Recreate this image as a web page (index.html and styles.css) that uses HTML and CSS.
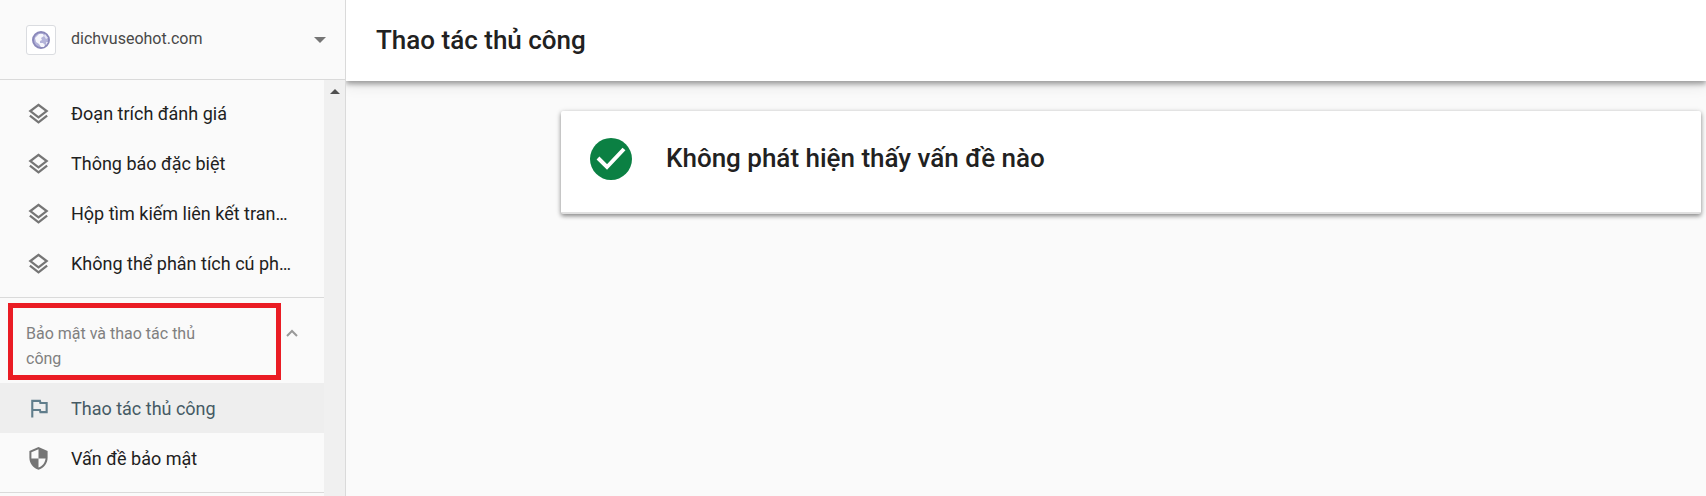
FILE: index.html
```html
<!DOCTYPE html>
<html lang="vi">
<head>
<meta charset="utf-8">
<meta name="viewport" content="width=device-width, initial-scale=1">
<title>Thao tác thủ công</title>
<link rel="stylesheet" href="styles.css">
</head>
<body>
<svg class="symbols" aria-hidden="true">
  <symbol id="layers" viewBox="0 0 24 24"><path d="M12 3 20.500 9.500 12 16 3.500 9.500z M3 14.300 12 21.300 21 14.300" fill="none" stroke="currentColor" stroke-width="2.400"/></symbol>
</svg>
<div class="app">
  <aside class="sidebar">
    <button class="property" type="button">
      <span class="favicon">
        <svg viewBox="0 0 20 20" aria-hidden="true"><circle cx="10" cy="10" r="8" fill="#b3b3d9" stroke="#8a88ba" stroke-width="2"/><path d="M4 8l4-4 4 0 1 2-3 2 1 2-2 1 0 2 3 0 2 2-1 2-3 0-2-3-3-2z" fill="#f6f6fc"/><path d="M14 4l3 4-2 1-2-3zM15 12l2 0-2 3z" fill="#e4e4f4"/></svg>
      </span>
      <span class="property-name">dichvuseohot.com</span>
      <svg class="caret" viewBox="0 0 12 6" aria-hidden="true"><path d="M0 0h12L6 6z"/></svg>
    </button>
    <div class="scroll-area">
      <nav class="menu">
        <div class="group">
          <a class="item" href="#"><svg class="icon"><use href="#layers"/></svg><span class="label">Đoạn trích đánh giá</span></a>
          <a class="item" href="#"><svg class="icon"><use href="#layers"/></svg><span class="label">Thông báo đặc biệt</span></a>
          <a class="item" href="#"><svg class="icon"><use href="#layers"/></svg><span class="label">Hộp tìm kiếm liên kết tran…</span></a>
          <a class="item" href="#"><svg class="icon"><use href="#layers"/></svg><span class="label">Không thể phân tích cú ph…</span></a>
        </div>
        <div class="group group-security">
          <button class="group-title" type="button" aria-expanded="true">
            <span class="group-name">Bảo mật và thao tác thủ công</span>
            <svg class="chevron" viewBox="0 0 12 8" aria-hidden="true"><path d="M1 7l5-5 5 5" fill="none" stroke="currentColor" stroke-width="2"/></svg>
            <span class="highlight"></span>
          </button>
          <a class="item active" href="#" aria-current="page"><svg class="icon" viewBox="0 0 24 24"><path d="M5.500 21.500V4h8l.5 2.200H20.500v9.600h-6.500L13.500 13.500H5.500" fill="none" stroke="currentColor" stroke-width="2.200"/></svg><span class="label">Thao tác thủ công</span></a>
          <a class="item" href="#"><svg class="icon" viewBox="0 0 24 24"><path d="M12 0 2.500 4.200v7c0 5.800 4 11 9.500 12.600 5.500-1.600 9.500-6.800 9.500-12.600v-7z" fill="currentColor"/><path d="M12 2.400V12H4.600V5.600zM12 12h7.400c-.6 4.400-3.400 8.100-7.400 9.500z" fill="#fafafa"/></svg><span class="label">Vấn đề bảo mật</span></a>
        </div>
      </nav>
      <div class="scrollbar"><svg class="scroll-up" viewBox="0 0 10 5" aria-hidden="true"><path d="M5 0l5 5H0z"/></svg></div>
    </div>
  </aside>
  <main class="main">
    <header class="topbar"><h1 class="heading">Thao tác thủ công</h1></header>
    <section class="card">
      <svg class="status" viewBox="0 0 42 42" aria-hidden="true"><circle cx="21" cy="21" r="21" fill="#0b8043"/><path d="M8 20l9 9L34 11" fill="none" stroke="#fff" stroke-width="4"/></svg>
      <h2 class="heading">Không phát hiện thấy vấn đề nào</h2>
    </section>
  </main>
</div>
</body>
</html>
```
FILE: styles.css
```css
* {
  box-sizing: border-box;
}

body {
  margin: 0;
  background: #fafafa;
  color: #212121;
  font-family: Roboto, sans-serif;
  font-size: 18px;
}

button {
  border: 0;
  background: none;
  font-family: inherit;
  text-align: left;
}

.symbols {
  position: absolute;
  width: 0;
  height: 0;
}

.app {
  display: flex;
  height: 100vh;
}

.sidebar {
  display: flex;
  flex: 0 0 346px;
  flex-direction: column;
  border-right: 1px solid #dadada;
}

.property {
  display: flex;
  flex: 0 0 80px;
  align-items: center;
  gap: 15px;
  padding: 0 19px 0 26px;
  border-bottom: 1px solid #dadada;
  color: #484848;
  font-size: 16px;
}

.favicon {
  display: flex;
  padding: 4px;
  border: 1px solid #dadce0;
  border-radius: 3px;
  background: #fff;
}

.favicon svg {
  width: 20px;
  height: 20px;
}

.property-name {
  flex: 1;
  padding-bottom: 2px;
}

.caret {
  width: 12px;
  height: 6px;
  fill: #757575;
}

.scroll-area {
  display: flex;
  flex: 1;
  min-height: 0;
  overflow: hidden;
}

.menu {
  flex: 1;
  min-width: 0;
}

.group {
  padding: 8px 0 9px;
  border-bottom: 1px solid #dadada;
}

.group-security {
  padding-top: 0;
}

.item {
  display: flex;
  align-items: center;
  gap: 21px;
  height: 50px;
  padding-left: 27px;
  color: #212121;
  text-decoration: none;
}

.icon {
  flex: none;
  width: 23px;
  height: 23px;
  color: #757575;
}

.label {
  white-space: nowrap;
}

.active {
  background: #eeeeee;
  color: #455a64;
}

.active .icon {
  color: #607d8b;
}

.group-title {
  position: relative;
  display: flex;
  align-items: flex-start;
  justify-content: space-between;
  width: 100%;
  padding: 23px 26px 12px;
  color: #808080;
  font-size: 16px;
  line-height: 25px;
}

.group-name {
  width: 200px;
}

.chevron {
  width: 12px;
  height: 8px;
  margin-top: 8px;
  color: #999;
}

.highlight {
  position: absolute;
  inset: 5px 43px 3px 8px;
  border: 5px solid #ea1c24;
}

.scrollbar {
  display: flex;
  flex: 0 0 21px;
  justify-content: center;
  padding-top: 9px;
  background: #f0f0f0;
}

.scroll-up {
  width: 10px;
  height: 5px;
  fill: #505050;
}

.main {
  flex: 1;
  min-width: 0;
  overflow: hidden;
}

.topbar {
  display: flex;
  align-items: center;
  height: 81px;
  padding: 0 30px 2px;
  background: #fff;
  box-shadow: 0 3px 5px rgba(0, 0, 0, .34), 0 4px 14px rgba(0, 0, 0, .1);
}

.heading {
  margin: 0;
  font-size: 26px;
  font-weight: 500;
  line-height: 32px;
}

.card {
  display: flex;
  gap: 34px;
  margin: 30px 5px 0 215px;
  padding: 27px 29px 32px;
  border-bottom: 2px solid #e0e0e0;
  border-radius: 2px;
  background: #fff;
  box-shadow: 0 2px 4px rgba(0, 0, 0, .4), 0 1px 6px rgba(0, 0, 0, .12);
}

.status {
  width: 42px;
  height: 42px;
}

.card .heading {
  padding-top: 4px;
}
```
